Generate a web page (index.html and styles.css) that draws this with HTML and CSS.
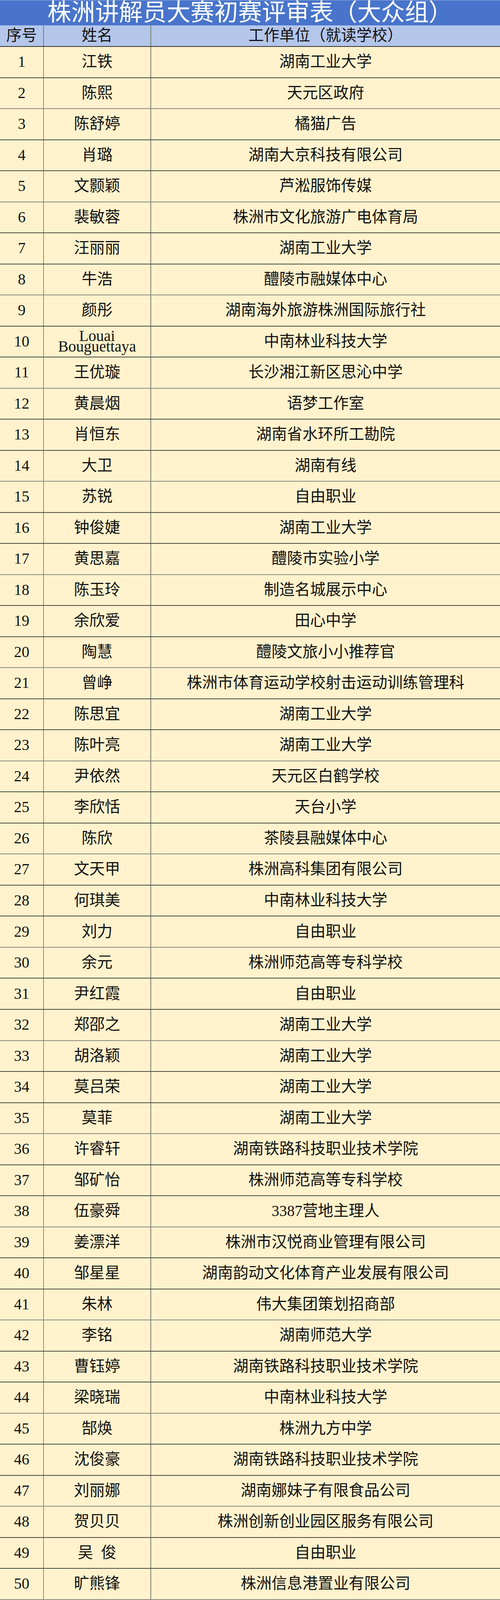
FILE: index.html
```html
<!DOCTYPE html>
<html lang="zh-CN">
<head>
<meta charset="utf-8">
<title>株洲讲解员大赛初赛评审表（大众组）</title>
<link rel="stylesheet" href="styles.css">
</head>
<body>
<div class="sheet">
  <div class="title">株洲讲解员大赛初赛评审表（大众组）</div>
  <div class="row head">
    <div class="cell c1">序号</div>
    <div class="cell c2">姓名</div>
    <div class="cell c3">工作单位（就读学校）</div>
  </div>
  <div class="row"><div class="cell c1">1</div><div class="cell c2">江铁</div><div class="cell c3">湖南工业大学</div></div>
  <div class="row"><div class="cell c1">2</div><div class="cell c2">陈熙</div><div class="cell c3">天元区政府</div></div>
  <div class="row"><div class="cell c1">3</div><div class="cell c2">陈舒婷</div><div class="cell c3">橘猫广告</div></div>
  <div class="row"><div class="cell c1">4</div><div class="cell c2">肖璐</div><div class="cell c3">湖南大京科技有限公司</div></div>
  <div class="row"><div class="cell c1">5</div><div class="cell c2">文颢颖</div><div class="cell c3">芦淞服饰传媒</div></div>
  <div class="row"><div class="cell c1">6</div><div class="cell c2">裴敏蓉</div><div class="cell c3">株洲市文化旅游广电体育局</div></div>
  <div class="row"><div class="cell c1">7</div><div class="cell c2">汪丽丽</div><div class="cell c3">湖南工业大学</div></div>
  <div class="row"><div class="cell c1">8</div><div class="cell c2">牛浩</div><div class="cell c3">醴陵市融媒体中心</div></div>
  <div class="row"><div class="cell c1">9</div><div class="cell c2">颜彤</div><div class="cell c3">湖南海外旅游株洲国际旅行社</div></div>
  <div class="row"><div class="cell c1">10</div><div class="cell c2 latin">Louai Bouguettaya</div><div class="cell c3">中南林业科技大学</div></div>
  <div class="row"><div class="cell c1">11</div><div class="cell c2">王优璇</div><div class="cell c3">长沙湘江新区思沁中学</div></div>
  <div class="row"><div class="cell c1">12</div><div class="cell c2">黄晨烟</div><div class="cell c3">语梦工作室</div></div>
  <div class="row"><div class="cell c1">13</div><div class="cell c2">肖恒东</div><div class="cell c3">湖南省水环所工勘院</div></div>
  <div class="row"><div class="cell c1">14</div><div class="cell c2">大卫</div><div class="cell c3">湖南有线</div></div>
  <div class="row"><div class="cell c1">15</div><div class="cell c2">苏锐</div><div class="cell c3">自由职业</div></div>
  <div class="row"><div class="cell c1">16</div><div class="cell c2">钟俊婕</div><div class="cell c3">湖南工业大学</div></div>
  <div class="row"><div class="cell c1">17</div><div class="cell c2">黄思嘉</div><div class="cell c3">醴陵市实验小学</div></div>
  <div class="row"><div class="cell c1">18</div><div class="cell c2">陈玉玲</div><div class="cell c3">制造名城展示中心</div></div>
  <div class="row"><div class="cell c1">19</div><div class="cell c2">余欣爱</div><div class="cell c3">田心中学</div></div>
  <div class="row"><div class="cell c1">20</div><div class="cell c2">陶慧</div><div class="cell c3">醴陵文旅小小推荐官</div></div>
  <div class="row"><div class="cell c1">21</div><div class="cell c2">曾峥</div><div class="cell c3">株洲市体育运动学校射击运动训练管理科</div></div>
  <div class="row"><div class="cell c1">22</div><div class="cell c2">陈思宜</div><div class="cell c3">湖南工业大学</div></div>
  <div class="row"><div class="cell c1">23</div><div class="cell c2">陈叶亮</div><div class="cell c3">湖南工业大学</div></div>
  <div class="row"><div class="cell c1">24</div><div class="cell c2">尹依然</div><div class="cell c3">天元区白鹤学校</div></div>
  <div class="row"><div class="cell c1">25</div><div class="cell c2">李欣恬</div><div class="cell c3">天台小学</div></div>
  <div class="row"><div class="cell c1">26</div><div class="cell c2">陈欣</div><div class="cell c3">茶陵县融媒体中心</div></div>
  <div class="row"><div class="cell c1">27</div><div class="cell c2">文天甲</div><div class="cell c3">株洲高科集团有限公司</div></div>
  <div class="row"><div class="cell c1">28</div><div class="cell c2">何琪美</div><div class="cell c3">中南林业科技大学</div></div>
  <div class="row"><div class="cell c1">29</div><div class="cell c2">刘力</div><div class="cell c3">自由职业</div></div>
  <div class="row"><div class="cell c1">30</div><div class="cell c2">余元</div><div class="cell c3">株洲师范高等专科学校</div></div>
  <div class="row"><div class="cell c1">31</div><div class="cell c2">尹红霞</div><div class="cell c3">自由职业</div></div>
  <div class="row"><div class="cell c1">32</div><div class="cell c2">郑邵之</div><div class="cell c3">湖南工业大学</div></div>
  <div class="row"><div class="cell c1">33</div><div class="cell c2">胡洛颖</div><div class="cell c3">湖南工业大学</div></div>
  <div class="row"><div class="cell c1">34</div><div class="cell c2">莫吕荣</div><div class="cell c3">湖南工业大学</div></div>
  <div class="row"><div class="cell c1">35</div><div class="cell c2">莫菲</div><div class="cell c3">湖南工业大学</div></div>
  <div class="row"><div class="cell c1">36</div><div class="cell c2">许睿轩</div><div class="cell c3">湖南铁路科技职业技术学院</div></div>
  <div class="row"><div class="cell c1">37</div><div class="cell c2">邹矿怡</div><div class="cell c3">株洲师范高等专科学校</div></div>
  <div class="row"><div class="cell c1">38</div><div class="cell c2">伍豪舜</div><div class="cell c3">3387营地主理人</div></div>
  <div class="row"><div class="cell c1">39</div><div class="cell c2">姜漂洋</div><div class="cell c3">株洲市汉悦商业管理有限公司</div></div>
  <div class="row"><div class="cell c1">40</div><div class="cell c2">邹星星</div><div class="cell c3">湖南韵动文化体育产业发展有限公司</div></div>
  <div class="row"><div class="cell c1">41</div><div class="cell c2">朱林</div><div class="cell c3">伟大集团策划招商部</div></div>
  <div class="row"><div class="cell c1">42</div><div class="cell c2">李铭</div><div class="cell c3">湖南师范大学</div></div>
  <div class="row"><div class="cell c1">43</div><div class="cell c2">曹钰婷</div><div class="cell c3">湖南铁路科技职业技术学院</div></div>
  <div class="row"><div class="cell c1">44</div><div class="cell c2">梁晓瑞</div><div class="cell c3">中南林业科技大学</div></div>
  <div class="row"><div class="cell c1">45</div><div class="cell c2">郜焕</div><div class="cell c3">株洲九方中学</div></div>
  <div class="row"><div class="cell c1">46</div><div class="cell c2">沈俊豪</div><div class="cell c3">湖南铁路科技职业技术学院</div></div>
  <div class="row"><div class="cell c1">47</div><div class="cell c2">刘丽娜</div><div class="cell c3">湖南娜妹子有限食品公司</div></div>
  <div class="row"><div class="cell c1">48</div><div class="cell c2">贺贝贝</div><div class="cell c3">株洲创新创业园区服务有限公司</div></div>
  <div class="row"><div class="cell c1">49</div><div class="cell c2 spaced">吴 俊</div><div class="cell c3">自由职业</div></div>
  <div class="row"><div class="cell c1">50</div><div class="cell c2">旷熊锋</div><div class="cell c3">株洲信息港置业有限公司</div></div>
</div>
</body>
</html>
```
FILE: styles.css
```css
html, body {
  margin: 0;
  padding: 0;
  background: #fff2cc;
}
.sheet {
  width: 1280px;
  height: 100vh;
  display: flex;
  flex-direction: column;
  font-family: "Liberation Serif", "Noto Sans CJK SC", serif;
  color: #111;
}
.title {
  flex: 117 1 0;
  min-height: 0;
  background: #4874cb;
  color: #ffffff;
  font-size: 61px;
  line-height: 1;
  display: flex;
  align-items: center;
  justify-content: center;
  box-sizing: border-box;
  border-top: 1px solid #9db2dc;
  padding-bottom: 2px;
}
.row {
  flex: 146.28 1 0;
  min-height: 0;
  display: grid;
  grid-template-columns: 112px 275px 1fr;
  box-sizing: border-box;
  border-bottom: 2px solid #4a4a40;
  background: #fff2cc;
}
.row:nth-child(3n+1) {
  border-bottom-color: #8a8a80;
}
.row.head {
  flex: 100 1 0;
  background: #b4c6ea;
  border-bottom: 2px solid #333;
}
.cell {
  min-height: 0;
  display: flex;
  align-items: center;
  justify-content: center;
  text-align: center;
  font-size: 39.5px;
  line-height: 1.25;
  padding: 0 6px;
  box-sizing: border-box;
}
.c1 {
  border-right: 1px solid #333;
  padding: 0;
}
.c2 {
  border-right: 2px solid #7a7a70;
}
.latin {
  line-height: min(1.25em, 0.664vh);
}
.spaced {
  word-spacing: 10px;
}
```
